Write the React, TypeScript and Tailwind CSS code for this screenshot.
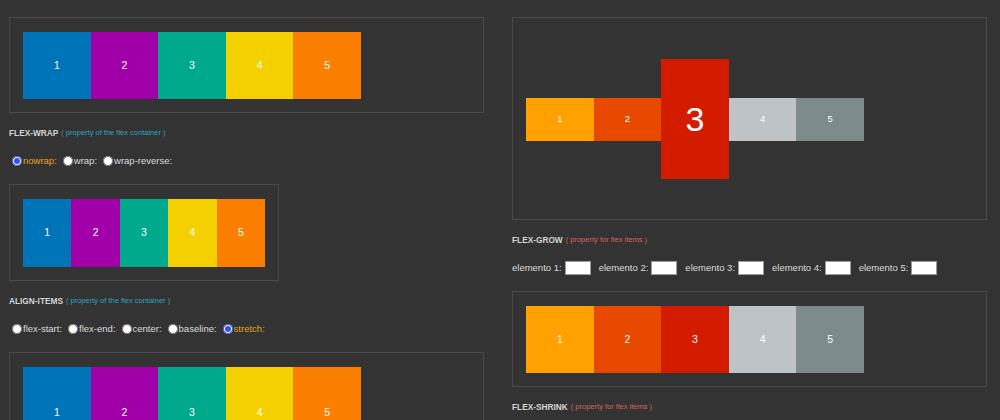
import React from 'react';

const leftColors = ['bg-[#0074b9]', 'bg-[#a100a9]', 'bg-[#00a98b]', 'bg-[#f5d000]', 'bg-[#fa7f00]'];
const rightColors = ['bg-[#ffa100]', 'bg-[#e84900]', 'bg-[#d31b00]', 'bg-[#bec3c7]', 'bg-[#7e8b8c]'];

function Heading({ title, note, tone }: { title: string; note: string; tone: 'container' | 'item' }) {
  return (
    <div className="mt-[14px] h-[12px] flex items-center gap-[3px] whitespace-nowrap text-[8px] leading-[12px]">
      <span className="text-[8.3px] font-bold text-[#d6d6d6]">{title}</span>
      <span className={`text-[7.5px] ${tone === 'container' ? 'text-[#2aa3c3]' : 'text-[#d9605c]'}`}>{note}</span>
    </div>
  );
}

function Radios({ options, checked }: { options: string[]; checked: string }) {
  return (
    <div className="mt-[14px] pl-[3px] flex items-center h-[16px] text-[9.5px] leading-[16px] text-[#dcdcdc]">
      {options.map((o) => (
        <label key={o} className="flex items-center mr-[6px]">
          <input
            type="radio"
            name={options[0]}
            defaultChecked={o === checked}
            className="w-[10px] h-[10px] m-0 mr-[1px] accent-[#3350ee]"
          />
          <span className={o === checked ? 'text-[#e3a31c]' : ''}>{o}:</span>
        </label>
      ))}
    </div>
  );
}

function Box({ children, className = '' }: { children: React.ReactNode; className?: string }) {
  return (
    <div className={`border border-[#4a4a4a] px-[13px] pt-[14px] pb-[13px] flex flex-nowrap ${className}`}>{children}</div>
  );
}

export default function App() {
  return (
    <div className="bg-[#333333] font-['Liberation_Sans',Arial,sans-serif] overflow-hidden h-[420px]">
      <div className="flex gap-[28px] pl-[9px] pt-[17px]">
        {/* Left column */}
        <div className="w-[475px] shrink-0">
          <Box>
            {leftColors.map((c, i) => (
              <div key={i} className={`${c} w-[67.6px] h-[67px] shrink-0 flex items-center justify-center text-[10.5px] text-white`}>
                {i + 1}
              </div>
            ))}
          </Box>
          <Heading title="FLEX-WRAP" note="( property of the flex container )" tone="container" />
          <Radios options={['nowrap', 'wrap', 'wrap-reverse']} checked="nowrap" />
          <Box className="w-[270px] mt-[15px]">
            {leftColors.map((c, i) => (
              <div key={i} className={`${c} w-[67.6px] h-[68px] min-w-0 shrink flex items-center justify-center text-[10.5px] text-white`}>
                {i + 1}
              </div>
            ))}
          </Box>
          <Heading title="ALIGN-ITEMS" note="( property of the flex container )" tone="container" />
          <Radios options={['flex-start', 'flex-end', 'center', 'baseline', 'stretch']} checked="stretch" />
          <Box className="mt-[15px] h-[120px] items-stretch">
            {leftColors.map((c, i) => (
              <div key={i} className={`${c} w-[67.6px] shrink-0 flex items-center justify-center text-[10.5px] text-white`}>
                {i + 1}
              </div>
            ))}
          </Box>
        </div>

        {/* Right column */}
        <div className="w-[475px] shrink-0">
          <Box className="h-[203px] items-center">
            {rightColors.map((c, i) =>
              i === 2 ? (
                <div key={i} className={`${c} w-[67.6px] h-[120px] shrink-0 flex items-center justify-center text-[34px] font-light text-white`}>
                  {i + 1}
                </div>
              ) : (
                <div key={i} className={`${c} w-[67.6px] h-[43px] shrink-0 flex items-center justify-center text-[9.5px] text-white`}>
                  {i + 1}
                </div>
              )
            )}
          </Box>
          <Heading title="FLEX-GROW" note="( property for flex items )" tone="item" />
          <div className="mt-[14px] flex items-center h-[16px] text-[9.5px] text-[#dcdcdc]">
            {[1, 2, 3, 4, 5].map((n) => (
              <label key={n} className="flex items-center mr-[8px]">
                <span>elemento {n}:</span>
                <input type="text" className="ml-[3px] w-[26px] h-[14px] bg-white border border-[#9a9a9a] outline-none" />
              </label>
            ))}
          </div>
          <Box className="mt-[15px]">
            {rightColors.map((c, i) => (
              <div key={i} className={`${c} w-[67.6px] h-[67px] shrink-0 flex items-center justify-center text-[10.5px] text-white`}>
                {i + 1}
              </div>
            ))}
          </Box>
          <Heading title="FLEX-SHRINK" note="( property for flex items )" tone="item" />
        </div>
      </div>
    </div>
  );
}
